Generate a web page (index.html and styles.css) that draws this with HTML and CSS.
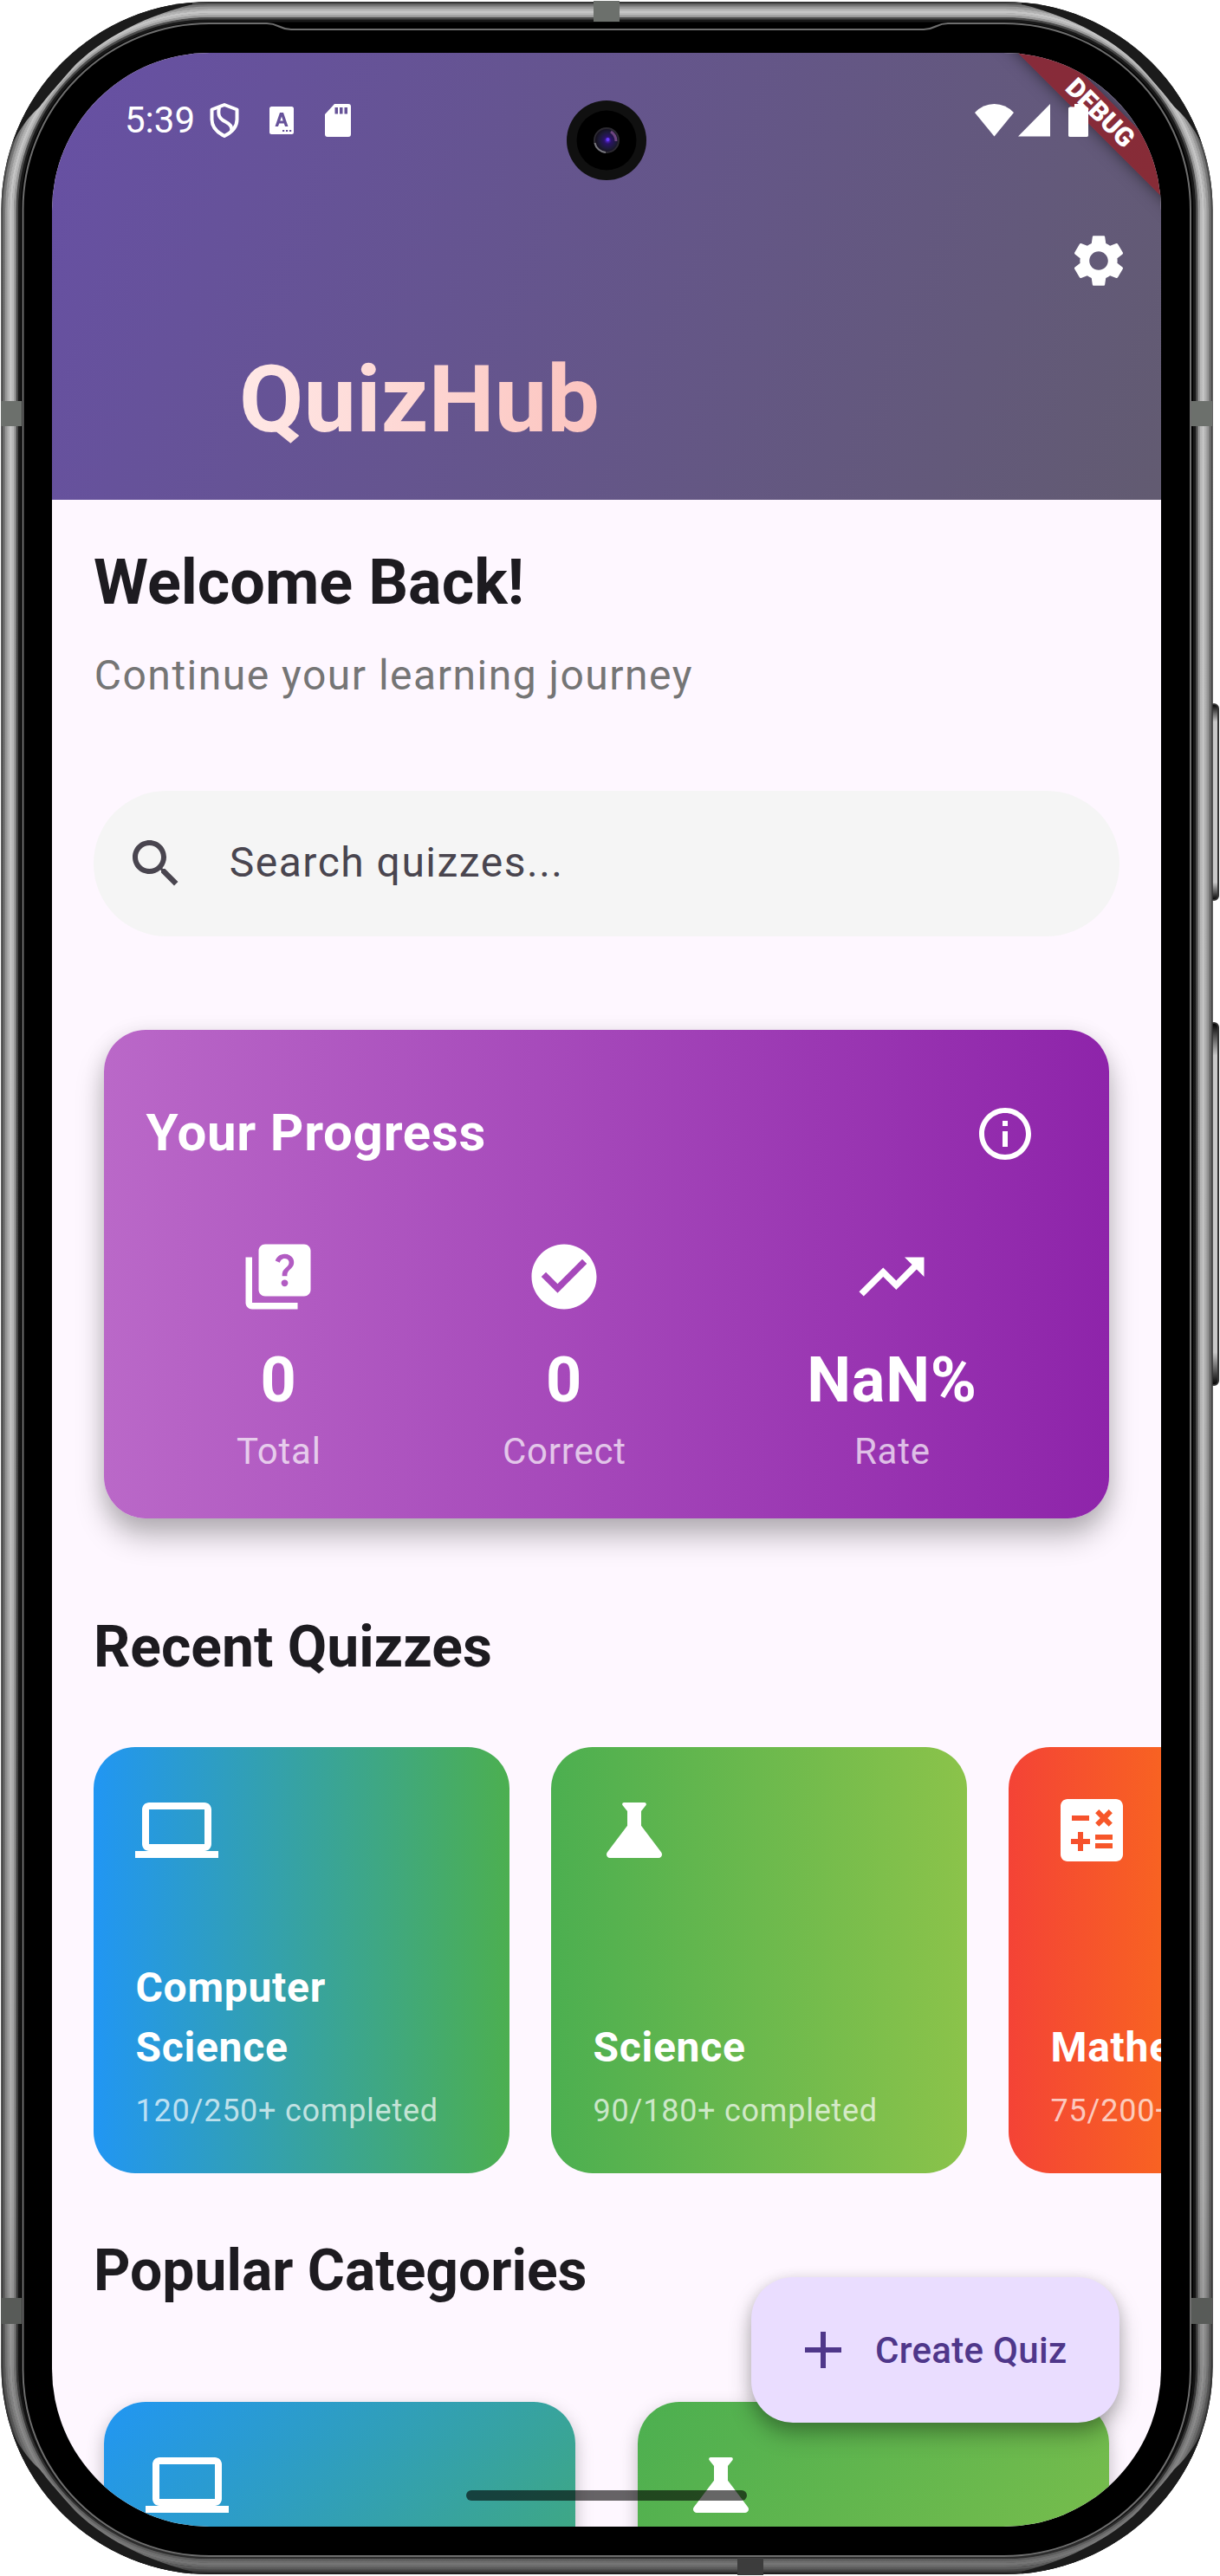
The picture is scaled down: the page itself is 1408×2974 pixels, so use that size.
FILE: index.html
```html
<!DOCTYPE html>
<html lang="en">
<head>
<meta charset="utf-8">
<title>QuizHub</title>
<link rel="stylesheet" href="styles.css">
</head>
<body>
<svg class="defs" width="0" height="0" aria-hidden="true">
  <symbol id="laptop" viewBox="0 0 24 24"><path d="M20 18c1.1 0 1.99-.9 1.99-2L22 6c0-1.1-.9-2-2-2H4c-1.1 0-2 .9-2 2v10c0 1.1.9 2 2 2H0v2h24v-2h-4zM4 6h16v10H4V6z"/></symbol>
  <symbol id="flask" viewBox="0 0 24 24"><path d="M19.8 18.4L14 10.67V6.5l1.35-1.69c.26-.33.03-.81-.39-.81H9.04c-.42 0-.65.48-.39.81L10 6.5v4.17L4.2 18.4c-.49.66-.02 1.6.8 1.6h14c.82 0 1.29-.94.8-1.6z"/></symbol>
</svg>

<div class="device">
  <svg class="frame" viewBox="0 0 1408 2974" aria-hidden="true">
    <defs>
      <linearGradient id="shade" x1="0" y1="0" x2="0" y2="1">
        <stop offset="0" stop-color="#000" stop-opacity="0"/>
        <stop offset=".55" stop-color="#000" stop-opacity=".03"/>
        <stop offset=".85" stop-color="#000" stop-opacity=".14"/>
        <stop offset=".97" stop-color="#000" stop-opacity=".35"/>
        <stop offset="1" stop-color="#000" stop-opacity=".42"/>
      </linearGradient>
      <radialGradient id="lens" cx=".55" cy=".5" r=".5">
        <stop offset="0" stop-color="#5a2be0"/>
        <stop offset=".3" stop-color="#2a1366"/>
        <stop offset=".7" stop-color="#1c1a38"/>
        <stop offset="1" stop-color="#15101c"/>
      </radialGradient>
      <linearGradient id="key" x1="0" y1="0" x2="0" y2="1">
        <stop offset="0" stop-color="#000"/>
        <stop offset=".09" stop-color="#c9c9c9"/>
        <stop offset=".91" stop-color="#c9c9c9"/>
        <stop offset="1" stop-color="#000"/>
      </linearGradient>
      <clipPath id="outline"><rect x="1.5" y="2" width="1398" height="2970" rx="240"/></clipPath>
      <path id="corner" d="M8 176C20 114 73 54 160 17C182 9 202 6 222 5L222 0H0V176ZM8 176C20 154 30 137 46 123C60 105 58 108 77 86C105 52 160 20 222 5L160 0L0 100Z"/>
    </defs>
    <rect x="1396" y="813" width="10" height="226" rx="5" fill="url(#key)" stroke="#333" stroke-width="2"/>
    <rect x="1396" y="1181" width="10" height="418" rx="5" fill="url(#key)" stroke="#333" stroke-width="2"/>
    <g fill="none" stroke-width="3">
      <rect x="1.5" y="2" width="1398" height="2970" rx="240" fill="#000" stroke="none"/>
      <rect x="3" y="4" width="1395" height="2966" rx="238" stroke="#4c4c4c"/>
      <rect x="5" y="6.5" width="1391" height="2961" rx="236" stroke="#767676"/>
      <rect x="7.5" y="9" width="1386" height="2956" rx="234" stroke="#999"/>
      <rect x="10" y="11.5" width="1381" height="2951" rx="232" stroke="#b2b2b2"/>
      <rect x="12.5" y="14" width="1376" height="2946" rx="230" stroke="#c6c6c6"/>
      <rect x="15" y="16.5" width="1371" height="2941" rx="227" stroke="#b9b9b9"/>
      <rect x="17.5" y="19" width="1366" height="2936" rx="224" stroke="#9a9a9a"/>
      <rect x="20" y="21.5" width="1361" height="2931" rx="221" stroke="#4a4a4a"/>
      <rect x="22.5" y="24" width="1356" height="2926" rx="218" stroke="#181818" fill="#000"/>
    </g>
    <rect x="1.5" y="2" width="1398" height="2970" rx="240" fill="url(#shade)"/>
    <g clip-path="url(#outline)"><g fill="#1b1b1b">
      <use href="#corner"/>
      <use href="#corner" transform="translate(1401 0) scale(-1 1)"/>
      <use href="#corner" transform="translate(0 2974) scale(1 -1)"/>
      <use href="#corner" transform="translate(1401 2974) scale(-1 -1)"/>
    </g></g>
    <path d="M26.500 242A215 215 0 0 1 241.500 27H308C322 27 322 34 336 34H1066C1080 34 1080 27 1094 27H1159A215 215 0 0 1 1374 242V2736A215 215 0 0 1 1159 2951H241.500A215 215 0 0 1 26.500 2736Z" fill="#000" stroke="#6e6e6e" stroke-width="2"/>
    <g fill="#6c706c">
      <rect x="685" y="1" width="30" height="24"/>
      <rect x="1" y="463" width="24" height="29"/>
      <rect x="1375" y="463" width="24" height="29"/>
      <rect x="1" y="2653" width="24" height="30" fill="#585b58"/>
      <rect x="1375" y="2653" width="24" height="30" fill="#585b58"/>
      <rect x="851" y="2953" width="30" height="20" fill="#3c3c3c"/>
    </g>
  </svg>

  <main class="screen">
    <header class="header">
      <div class="status">
        <span class="clock">5:39</span>
        <svg class="shield" viewBox="0 0 34 40" fill="none" stroke="#fff" stroke-width="4" stroke-linejoin="round"><path d="M17 2L31.500 7.500V19C31.500 27.500 26 33.500 17 38C8 33.500 2.500 27.500 2.500 19V7.500Z"/><path d="M11 5C9 14 11 18 19 22C25 25 26 29 25 33"/></svg>
        <svg class="keyboard" viewBox="0 0 28 32"><path fill="#fff" fill-rule="evenodd" d="M2.500 0H25.500Q28 0 28 2.500V29.500Q28 32 25.500 32H2.500Q0 32 0 29.500V2.500Q0 0 2.500 0ZM12 7L6.500 23H10L11.200 19.500H16.800L18 23H21.500L16 7ZM12.300 16.500L14 11.500L15.700 16.500ZM15 27v2h2.200v-2ZM19 27v2h2.200v-2ZM23 27v2h2.200v-2Z"/></svg>
        <svg class="sdcard" viewBox="0 0 30 38"><path fill="#fff" fill-rule="evenodd" d="M11 0H27Q30 0 30 3V35Q30 38 27 38H3Q0 38 0 35V12ZM11.500 4v7.500h3.500V4ZM17 4v7.500h3.500V4ZM22.500 4v7.500h3.500V4Z"/></svg>
        <span class="spacer"></span>
        <svg class="wifi" viewBox="0 0 45 38"><path fill="#fff" d="M22.500 37.500L0 10Q9.500 0 22.500 0T45 10Z"/></svg>
        <svg class="signal" viewBox="0 0 37 38"><path fill="#fff" d="M37 0V37.500H0Z"/></svg>
        <svg class="battery" viewBox="0 0 23 38"><path fill="#fff" d="M7 0H16V3.500H20.500Q23 3.500 23 6V35.500Q23 38 20.500 38H2.500Q0 38 0 35.500V6Q0 3.500 2.500 3.500H7Z"/></svg>
      </div>
      <div class="toolbar">
        <svg class="icon24" viewBox="0 0 24 24" fill="#fff"><path d="M19.140 12.940c.04-.3.06-.61.06-.94 0-.32-.02-.64-.07-.94l2.030-1.580c.18-.14.23-.41.12-.61l-1.920-3.320c-.12-.22-.37-.29-.59-.22l-2.390.96c-.5-.38-1.030-.7-1.620-.94L14.400 2.810c-.04-.24-.24-.41-.48-.41h-3.840c-.24 0-.43.17-.47.41L9.250 5.350C8.660 5.590 8.120 5.920 7.630 6.290L5.240 5.330c-.22-.08-.47 0-.59.22L2.740 8.870c-.12.21-.08.47.12.61l2.030 1.580C4.840 11.360 4.800 11.690 4.800 12s.02.64.07.94l-2.030 1.580c-.18.14-.23.41-.12.61l1.920 3.320c.12.22.37.29.59.22l2.390-.96c.5.38 1.030.7 1.620.94l.36 2.540c.05.24.24.41.48.41h3.840c.24 0 .44-.17.47-.41l.36-2.540c.59-.24 1.130-.56 1.620-.94l2.390.96c.22.08.47 0 .59-.22l1.920-3.320c.12-.22.07-.47-.12-.61l-2.010-1.580zM12 15.600c-1.980 0-3.600-1.620-3.600-3.600s1.620-3.600 3.600-3.600 3.600 1.620 3.600 3.600-1.620 3.600-3.600 3.600z"/></svg>
      </div>
      <h1 class="brand"><span class="brand-text">QuizHub</span></h1>
    </header>

    <section class="body">
      <h2 class="welcome">Welcome Back!</h2>
      <p class="lead">Continue your learning journey</p>

      <div class="search">
        <svg class="icon24" viewBox="0 0 24 24" fill="#49454f"><path d="M15.500 14h-.79l-.28-.27C15.410 12.590 16 11.110 16 9.500 16 5.910 13.090 3 9.500 3S3 5.910 3 9.500 5.910 16 9.500 16c1.610 0 3.090-.59 4.230-1.570l.27.28v.79l5 4.990L20.490 19l-4.990-5zm-6 0C7.010 14 5 11.990 5 9.500S7.010 5 9.500 5 14 7.010 14 9.500 11.990 14 9.500 14z"/></svg>
        <span class="placeholder">Search quizzes...</span>
      </div>

      <div class="progress">
        <div class="progress-head">
          <span class="progress-title">Your Progress</span>
          <span class="info"><svg class="icon24" viewBox="0 0 24 24" fill="#fff"><path d="M11 7h2v2h-2zm0 4h2v6h-2zm1-9C6.480 2 2 6.480 2 12s4.480 10 10 10 10-4.480 10-10S17.520 2 12 2zm0 18c-4.410 0-8-3.590-8-8s3.590-8 8-8 8 3.590 8 8-3.590 8-8 8z"/></svg></span>
        </div>
        <div class="stats">
          <div class="stat">
            <svg class="icon30" viewBox="0 0 24 24" fill="#fff"><path d="M4 6H2v14c0 1.100.9 2 2 2h14v-2H4V6z"/><path d="M20 2H8c-1.100 0-2 .9-2 2v12c0 1.100.9 2 2 2h12c1.100 0 2-.9 2-2V4c0-1.100-.9-2-2-2zm-5.990 13c-.59 0-1.050-.47-1.050-1.050 0-.59.47-1.040 1.050-1.040.59 0 1.040.45 1.040 1.040-.01.58-.45 1.050-1.040 1.050zm2.500-6.170c-.63.93-1.230 1.210-1.560 1.810-.13.24-.18.4-.18 1.180h-1.520c0-.41-.06-1.080.26-1.650.41-.73 1.180-1.160 1.630-1.800.48-.68.21-1.940-1.140-1.940-.88 0-1.320.67-1.500 1.230l-1.370-.57C11.510 5.960 12.520 5 13.990 5c1.230 0 2.080.56 2.510 1.260.37.61.58 1.730.01 2.570z"/></svg>
            <strong class="value">0</strong>
            <span class="label">Total</span>
          </div>
          <div class="stat">
            <svg class="icon30" viewBox="0 0 24 24" fill="#fff"><path d="M12 2C6.480 2 2 6.480 2 12s4.480 10 10 10 10-4.480 10-10S17.520 2 12 2zm-2 15l-5-5 1.410-1.410L10 14.170l7.590-7.590L19 8l-9 9z"/></svg>
            <strong class="value">0</strong>
            <span class="label">Correct</span>
          </div>
          <div class="stat">
            <svg class="icon30" viewBox="0 0 24 24" fill="#fff"><path d="M16 6l2.290 2.290-4.880 4.880-4-4L2 16.590 3.410 18l6-6 4 4 6.300-6.290L22 12V6z"/></svg>
            <strong class="value">NaN%</strong>
            <span class="label">Rate</span>
          </div>
        </div>
      </div>

      <h3 class="heading">Recent Quizzes</h3>
      <div class="recent">
        <article class="quiz blue">
          <svg class="icon32"><use href="#laptop"/></svg>
          <div><p class="quiz-title">Computer Science</p><p class="quiz-sub">120/250+ completed</p></div>
        </article>
        <article class="quiz green">
          <svg class="icon32"><use href="#flask"/></svg>
          <div><p class="quiz-title">Science</p><p class="quiz-sub">90/180+ completed</p></div>
        </article>
        <article class="quiz red">
          <svg class="icon32" viewBox="0 0 24 24"><path d="M19 3H5c-1.100 0-2 .9-2 2v14c0 1.100.9 2 2 2h14c1.100 0 2-.9 2-2V5c0-1.100-.9-2-2-2zm-5.970 4.060L14.090 6l1.410 1.410L16.910 6l1.060 1.060-1.410 1.410 1.410 1.410-1.060 1.060-1.410-1.400-1.410 1.410-1.060-1.060 1.410-1.410-1.410-1.420zm-6.780.66h5v1.500h-5v-1.500zM11.500 16h-2v2H8v-2H6v-1.500h2v-2h1.500v2h2V16zm6.500 1.250h-5v-1.500h5v1.500zm0-2.500h-5v-1.500h5v1.500z"/></svg>
          <div><p class="quiz-title">Mathematics</p><p class="quiz-sub">75/200+ completed</p></div>
        </article>
      </div>

      <h3 class="heading">Popular Categories</h3>
      <div class="popular">
        <article class="category blue"><svg class="icon32"><use href="#laptop"/></svg></article>
        <article class="category green"><svg class="icon32"><use href="#flask"/></svg></article>
      </div>
    </section>

    <button class="fab">
      <svg class="icon24" viewBox="0 0 24 24" fill="#4f378a"><path d="M19 13h-6v6h-2v-6H5v-2h6V5h2v6h6v2z"/></svg>
      <span>Create Quiz</span>
    </button>
    <div class="nav-handle"></div>
    <div class="debug">DEBUG</div>
    <svg class="battery battery-top" viewBox="0 0 23 38"><path fill="#fff" d="M7 0H16V3.500H20.500Q23 3.500 23 6V35.500Q23 38 20.500 38H2.500Q0 38 0 35.500V6Q0 3.500 2.500 3.500H7Z"/></svg>
    <svg class="camera" viewBox="0 0 92 92" aria-hidden="true">
      <circle cx="46" cy="46" r="46" fill="#101010"/>
      <circle cx="46" cy="46" r="34.500" fill="#000"/>
      <circle cx="46" cy="46" r="14" fill="url(#lens)" stroke="#2b2930" stroke-width="2"/>
      <path d="M32.500 49A14 14 0 0 0 45 60" fill="none" stroke="#77777d" stroke-width="2"/>
      <path d="M51 36Q57 40 57 47" fill="none" stroke="#6d4580" stroke-width="3"/>
      <circle cx="47.500" cy="45" r="2" fill="#6a3cff"/>
    </svg>
  </main>
</div>
</body>
</html>
```
FILE: styles.css
```css
* { box-sizing: border-box; }
body { margin: 0; background: #fff; font-family: Roboto, "Liberation Sans", sans-serif; }
h1, h2, h3, p { margin: 0; }
svg { display: block; flex: none; }
.defs { position: absolute; }

.device { position: relative; width: 1408px; height: 2974px; padding: 61px 68px 57px 60px; overflow: hidden; }
.frame { position: absolute; inset: 0; width: 1408px; height: 2974px; }
.screen { position: relative; width: 1280px; height: 2856px; overflow: hidden; border-radius: 182px; background: #fef7ff; }

.icon24 { width: 72px; height: 72px; }
.icon30 { width: 90px; height: 90px; }
.icon32 { width: 96px; height: 96px; fill: #fff; }

.header { height: 516px; background: linear-gradient(111.96deg, #6750a4, #625b71); }
.status { display: flex; align-items: center; height: 156px; padding: 0 84px; }
.clock { width: 82px; font-size: 42px; line-height: 50px; color: #fff; }
.shield { width: 34px; height: 40px; margin-left: 16px; }
.keyboard { width: 28px; height: 32px; margin-left: 35px; }
.sdcard { width: 30px; height: 38px; margin-left: 36px; }
.spacer { flex: 1; }
.wifi { width: 45px; height: 38px; }
.signal { width: 37px; height: 38px; margin-left: 5px; }
.battery { width: 23px; height: 38px; margin-left: 21px; }
.toolbar { display: flex; align-items: center; justify-content: flex-end; height: 168px; padding-right: 36px; }
.brand { padding: 12px 0 0 216px; font-size: 108px; line-height: 128px; font-weight: 700; }
.brand-text { color: transparent; background: linear-gradient(90deg, #ffe8e6, #fcc4bf); -webkit-background-clip: text; background-clip: text; }

.body { padding: 48px 48px 0; }
.welcome { font-size: 72px; line-height: 95px; margin-bottom: 25px; font-weight: 700; color: #1d1b20; }
.lead { padding-left: .75px; font-size: 48px; line-height: 69px; margin-bottom: 99px; letter-spacing: 1.5px; color: #757575; }
.search { display: flex; align-items: center; gap: 48px; height: 168px; padding-left: 36px; border-radius: 84px; background: #f5f5f5; }
.placeholder { padding: 0 0 4px .75px; font-size: 48px; letter-spacing: 1.5px; color: #49454f; }

.progress { margin: 108px 12px; height: 564px; padding: 48px; border-radius: 48px; background: linear-gradient(90deg, #ba68c8, #8e24aa); box-shadow: 0 22px 32px rgba(0, 0, 0, .25), 0 4px 24px rgba(0, 0, 0, .1); color: #fff; }
.progress-head { display: flex; align-items: center; justify-content: space-between; height: 144px; margin-bottom: 48px; }
.progress-title { padding: 0 0 3px .4px; font-size: 60px; font-weight: 700; letter-spacing: .75px; }
.info { display: flex; align-items: center; justify-content: center; width: 144px; height: 144px; }
.stats { display: flex; justify-content: space-around; }
.stat { display: flex; flex-direction: column; align-items: center; }
.value { margin-top: 23px; font-size: 72px; line-height: 103px; letter-spacing: .75px; font-weight: 700; }
.label { margin-top: 1px; padding-left: .75px; font-size: 42px; line-height: 60px; letter-spacing: .75px; color: rgba(255, 255, 255, .7); }

.heading { font-size: 66px; line-height: 81px; margin-bottom: 75px; font-weight: 700; color: #1d1b20; }
.recent { display: flex; gap: 48px; margin-bottom: 72px; }
.quiz { display: flex; flex: none; flex-direction: column; justify-content: space-between; width: 480px; height: 492px; padding: 48px 48px 46px; border-radius: 48px; color: #fff; }
.quiz-title { font-size: 48px; line-height: 69px; margin-bottom: 14px; padding-left: .4px; font-weight: 700; letter-spacing: .75px; }
.quiz-sub { font-size: 36px; line-height: 51px; padding-left: .6px; letter-spacing: .75px; color: rgba(255, 255, 255, .7); white-space: nowrap; }
.quiz.blue { background: linear-gradient(90deg, #2196f3, #4caf50); }
.quiz.green { background: linear-gradient(90deg, #4caf50, #8bc34a); }
.quiz.red { background: linear-gradient(90deg, #f44336, #ff9800); }

.popular { display: grid; grid-template-columns: 544px 544px; gap: 72px; margin: 111px 12px 0; }
.category { height: 500px; padding: 48px; border-radius: 48px; box-shadow: 0 8px 20px rgba(0, 0, 0, .25); }
.category.blue { background: linear-gradient(132.6deg, #2196f3, #4caf50); }
.category.green { background: linear-gradient(132.6deg, #4caf50, #8bc34a); }

.fab { position: absolute; right: 48px; bottom: 120px; display: flex; align-items: center; gap: 24px; width: 425px; height: 168px; padding: 0 0 0 47px; border: 0; border-radius: 48px; background: #eaddff; color: #4f378a; font: 500 42px Roboto, sans-serif; letter-spacing: .3px; white-space: nowrap; box-shadow: 0 14px 26px rgba(0, 0, 0, .28), 0 3px 16px rgba(0, 0, 0, .12); }
.nav-handle { position: absolute; left: 478px; bottom: 30px; width: 324px; height: 12px; border-radius: 6px; background: rgba(0, 0, 0, .6); }
.debug { position: absolute; top: 53px; right: -91px; width: 320px; height: 36px; line-height: 35px; padding-right: 4px; text-align: center; transform: rotate(45deg); background: rgba(160, 13, 13, .6); box-shadow: 0 0 18px rgba(0, 0, 0, .5); color: #fff; font-size: 30.600px; font-weight: 900; }
.battery-top { position: absolute; top: 59px; left: 1173px; margin: 0; }
.camera { position: absolute; left: 594px; top: 55px; width: 92px; height: 92px; }
```
